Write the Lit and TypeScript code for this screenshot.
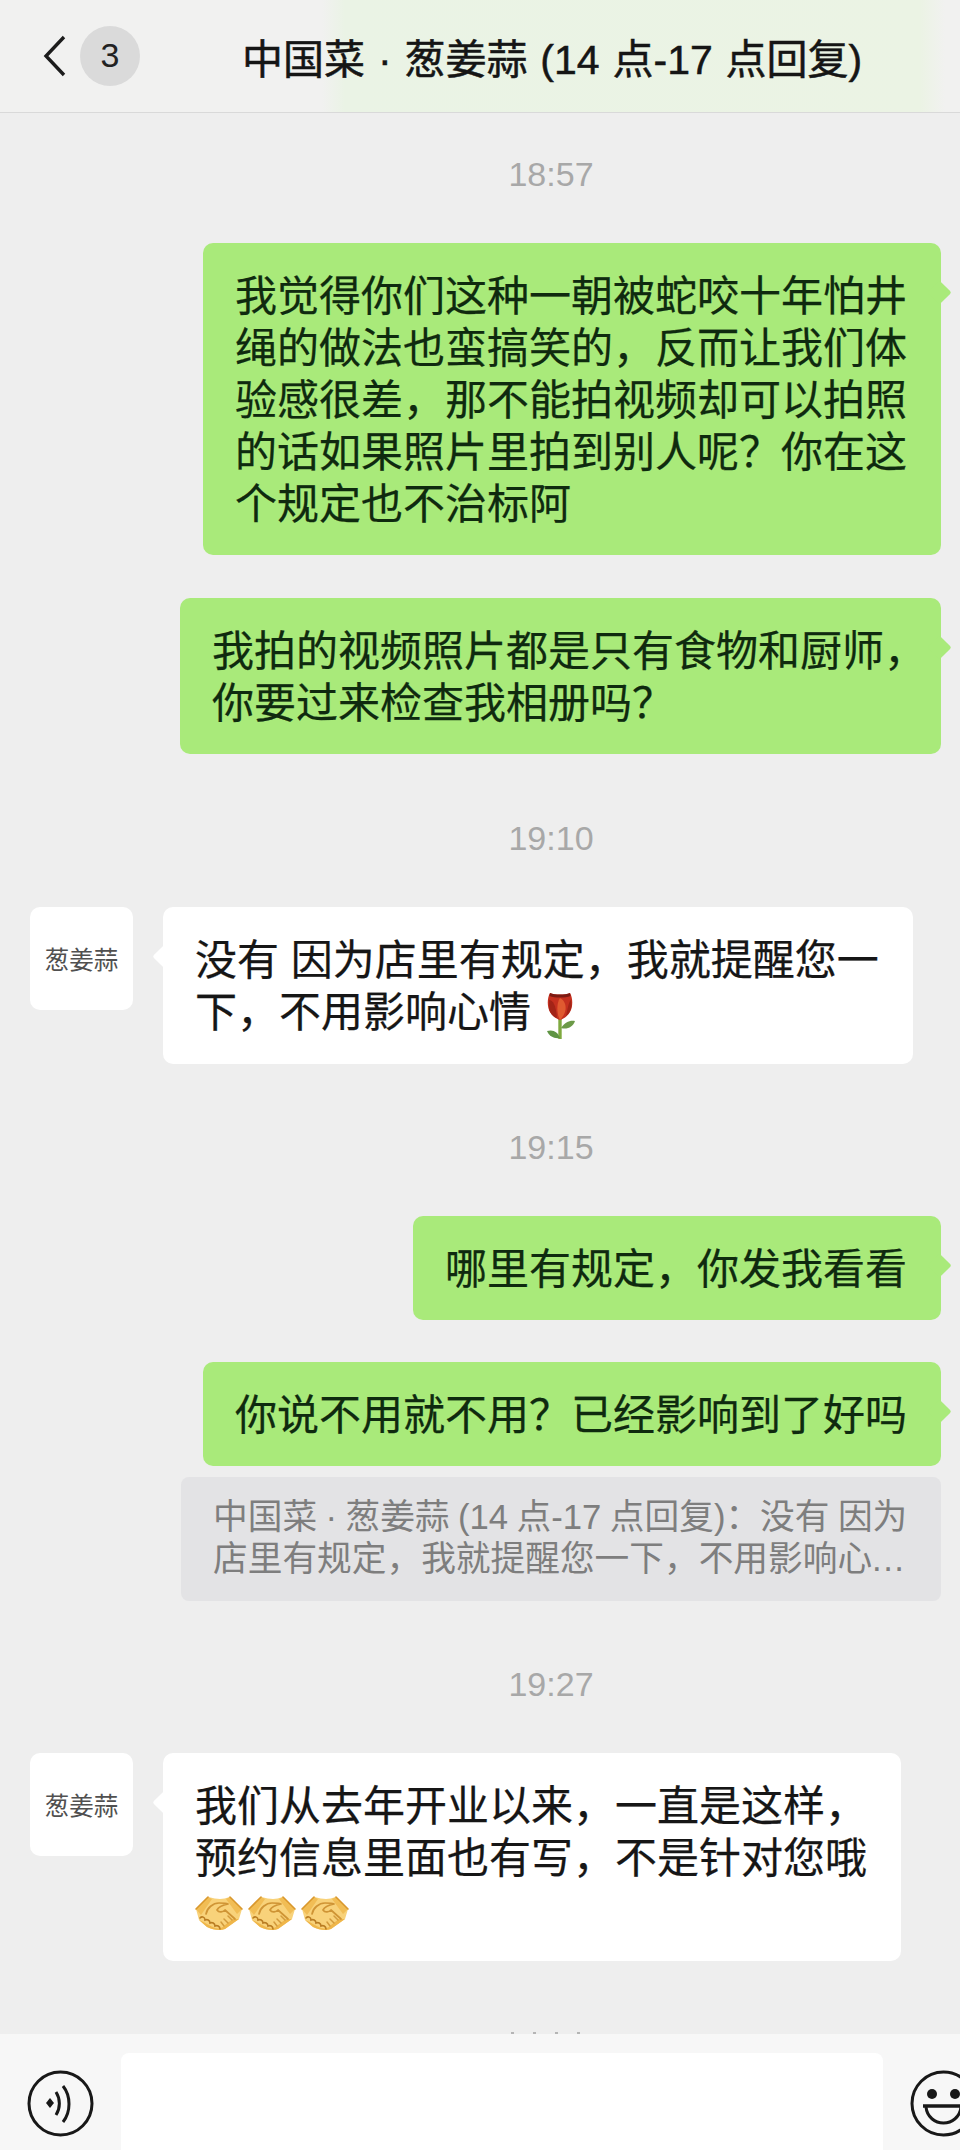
import { LitElement, html, css, svg } from "lit";
import { customElement } from "lit/decorators.js";

const rose = html`<svg class="rose" viewBox="0 0 30 48" aria-hidden="true">
  <path d="M15 24 V47" fill="none" stroke="#7fa93f" stroke-width="3.4"/>
  <path d="M16 36 C20 30 25 28 30 29 C28 35 22 38 16 36Z" fill="#6c9a48"/>
  <path d="M15 46 C9 47 4 44 2 39 C8 37 13 40 15 46Z" fill="#5f9444"/>
  <path d="M5 1 C10 3 20 3 25 1 C28 6 28 15 25 20 C22 25 18 27 15 28 C12 27 8 25 5 20 C2 15 2 6 5 1Z" fill="#c5301f"/>
  <path d="M5 1 C10 3 20 3 25 1 L25.5 4 C20 6 10 6 4.5 4Z" fill="#7c1a12"/>
  <path d="M15 6 C19 8 22 13 20 20 C19 23 17 26 15 28 C12 23 11 12 15 6Z" fill="#e05a30"/>
  <path d="M4 8 C8 8 11 13 12 26 C8 25 5 21 4 17Z" fill="#a32417"/>
  <path d="M26 8 C24 9 23 15 21 24 C24 22 26 18 26.5 14Z" fill="#a32417"/>
</svg>`;

const shake = html`<svg class="shake" viewBox="0 0 48 36" aria-hidden="true">
  <path d="M1 14 L13 2 C18 3 22 4 25 4 C28 4 31 3 35 2 L47 14 L44 24 L30 34 C25 36 18 35 12 32 L4 25Z" fill="#f8d27a"/>
  <path d="M4 25 C9 27 15 31 20 33 C24 34 28 33 30 30 L38 24 L44 24 L30 34 C25 36 18 35 12 32Z" fill="#efb64a"/>
  <path d="M1 14 L13 2 L17 4 L6 20Z M47 14 L35 2 L31 4 L42 19Z" fill="#f1bd55"/>
  <path d="M1 14 L13 2 M47 14 L35 2" stroke="#d9982e" stroke-width="1.6" stroke-linecap="round"/>
  <path d="M11 19 C12 13 18 8 24 8 C28 8 31 8 33 9 C28 10 24 11 22 15 C24 18 28 17 30 15 L40 24" fill="none" stroke="#cf9435" stroke-width="1.7" stroke-linecap="round" stroke-linejoin="round"/>
  <path d="M33 21 L37 25 M29 24 L33 28 M26 27 L29 31" stroke="#d29a3c" stroke-width="1.5" stroke-linecap="round"/>
  <path d="M5 23 C7 21 10 22 10 25 C12 24 15 25 15 28 C17 27 20 28 20 31 C22 30 25 31 25 34" fill="none" stroke="#b97c22" stroke-width="1.6" stroke-linecap="round"/>
</svg>`;

const voice = svg`<circle cx="33.5" cy="33.5" r="31.5" fill="none" stroke="#181818" stroke-width="3"/>
  <path d="M23 28 L27 33 L23 38 L19 33Z" fill="#181818"/>
  <path d="M29 22 C33.5 29 33.5 38 29 45" fill="none" stroke="#181818" stroke-width="3"/>
  <path d="M36 16 C44 26 44 42 36 52" fill="none" stroke="#181818" stroke-width="3"/>`;

const smile = svg`<circle cx="33.5" cy="33.5" r="31.5" fill="none" stroke="#181818" stroke-width="3"/>
  <circle cx="22" cy="24" r="5" fill="#181818"/><circle cx="45" cy="24" r="5" fill="#181818"/>
  <path d="M13 36 H54" stroke="#181818" stroke-width="3.4"/>
  <path d="M16 37 C17 47 25 53 33.5 53 C42 53 50 47 51 37" fill="none" stroke="#181818" stroke-width="3"/>`;

@customElement("app-root")
export class AppRoot extends LitElement {
  static styles = css`
    :host {
      display: block;
      width: 960px;
      height: 2150px;
      font-family: "Liberation Sans", "Noto Sans CJK SC", sans-serif;
    }
    .page {
      position: relative;
      display: flex;
      flex-direction: column;
      height: 2150px;
      overflow: hidden;
      background: #eeeeee;
    }
    .head {
      display: flex;
      align-items: center;
      flex: none;
      box-sizing: border-box;
      height: 113px;
      padding-left: 43px;
      padding-bottom: 1px;
      border-bottom: 1px solid #d9d9d9;
      background: linear-gradient(90deg, #f1f1f0 0, #f1f1f0 322px, #eaf3e5 345px, #ebf3e4 920px, #f1f1f0 945px);
    }
    .chev { width: 24px; height: 42px; flex: none; }
    .badge {
      display: flex;
      align-items: center;
      justify-content: center;
      flex: none;
      width: 60px;
      height: 60px;
      margin-left: 13px;
      border-radius: 50%;
      background: #dadada;
      color: #222;
      font-size: 34px;
    }
    .title {
      margin-left: 102px;
      font-size: 41px;
      font-weight: 400;
      -webkit-text-stroke: 0.5px #151515;
      word-spacing: 1.5px;
      color: #151515;
      white-space: nowrap;
    }
    .chat {
      flex: 1;
      min-height: 0;
      display: flex;
      flex-direction: column;
      align-items: flex-end;
      padding: 41px 19px 0 30px;
    }
    .time {
      align-self: stretch;
      box-sizing: border-box;
      height: 40px;
      line-height: 40px;
      padding-left: 131px;
      margin-bottom: 49px;
      text-align: center;
      font-size: 34px;
      color: #a8a8a8;
    }
    .bubble {
      position: relative;
      box-sizing: border-box;
      padding: 28px 34px 24px 32px;
      border-radius: 10px;
      font-size: 42px;
      line-height: 52px;
      white-space: nowrap;
      -webkit-text-stroke: 0.25px currentColor;
    }
    .bubble::after {
      content: "";
      position: absolute;
      top: 41px;
      width: 17px;
      height: 17px;
      border-radius: 2px;
      transform: rotate(45deg);
    }
    .right {
      margin-bottom: 43px;
      background: #a9ea7a;
      color: #0f2a0f;
    }
    .right::after { right: -7px; background: #a9ea7a; }
    .right.last { margin-bottom: 64px; }
    .right.one { margin-bottom: 42px; }
    .right.toquote { margin-bottom: 11px; }
    .trim { margin-right: -19px; }
    .quote {
      margin-bottom: 63px;
      box-sizing: border-box;
      width: 760px;
      padding: 19px 32px 21px;
      border-radius: 8px;
      background: #e3e3e5;
      color: #7e7e7e;
      font-size: 34.7px;
      line-height: 42px;
      word-spacing: -1.2px;
      white-space: nowrap;
    }
    .dots { letter-spacing: 1.5px; }
    .row {
      align-self: flex-start;
      display: flex;
      align-items: flex-start;
      gap: 30px;
      margin-bottom: 63px;
    }
    .avatar {
      display: flex;
      align-items: center;
      justify-content: center;
      flex: none;
      width: 103px;
      height: 103px;
      border-radius: 10px;
      background: #fff;
      color: #505050;
      font-size: 24.5px;
      white-space: nowrap;
    }
    .left { background: #fff; color: #161616; }
    .left::after { left: -7px; background: #fff; }
    .rose { display: inline-block; width: 30px; height: 48px; margin-left: 14px; vertical-align: -13px; }
    .shake { display: inline-block; width: 48px; height: 36px; margin-right: 5px; vertical-align: -6px; }
    .foot {
      position: relative;
      flex: none;
      display: flex;
      align-items: flex-start;
      box-sizing: border-box;
      height: 116px;
      padding: 19px 0 0 27px;
      background: #f7f7f7;
    }
    .icon { width: 67px; height: 67px; flex: none; margin-top: 17px; }
    .input {
      flex: none;
      width: 762px;
      height: 97px;
      margin: 0 27px;
      border-radius: 8px 8px 0 0;
      background: #fff;
    }
    .peek {
      position: absolute;
      top: -2px;
      left: 511px;
      display: flex;
      gap: 19px;
    }
    .peek i { display: block; width: 3px; height: 2px; background: #b5b5b5; }
  `;

  render() {
    return html`<div class="page">
      <header class="head">
        <svg class="chev" viewBox="0 0 24 42" aria-hidden="true"><path d="M21 2 L3 21 L21 40" fill="none" stroke="#1c1c1c" stroke-width="3.4"/></svg>
        <div class="badge">3</div>
        <div class="title">中国菜 · 葱姜蒜 (14 点-17 点回复)</div>
      </header>
      <main class="chat">
        <div class="time">18:57</div>
        <div class="bubble right">我觉得你们这种一朝被蛇咬十年怕井<br>绳的做法也蛮搞笑的，反而让我们体<br>验感很差，那不能拍视频却可以拍照<br>的话如果照片里拍到别人呢？你在这<br>个规定也不治标阿</div>
        <div class="bubble right last">我拍的视频照片都是只有食物和厨师<span class="trim">，</span><br>你要过来检查我相册吗？</div>
        <div class="time">19:10</div>
        <div class="row">
          <div class="avatar">葱姜蒜</div>
          <div class="bubble left">没有 因为店里有规定，我就提醒您一<br>下，不用影响心情${rose}</div>
        </div>
        <div class="time">19:15</div>
        <div class="bubble right one">哪里有规定，你发我看看</div>
        <div class="bubble right toquote">你说不用就不用？已经影响到了好吗</div>
        <div class="quote">中国菜 · 葱姜蒜 (14 点-17 点回复)：没有 因为<br>店里有规定，我就提醒您一下，不用影响心<span class="dots">...</span></div>
        <div class="time">19:27</div>
        <div class="row">
          <div class="avatar">葱姜蒜</div>
          <div class="bubble left">我们从去年开业以来，一直是这样，<br>预约信息里面也有写，不是针对您哦<br>${shake}${shake}${shake}</div>
        </div>
      </main>
      <footer class="foot">
        <div class="peek"><i></i><i></i><i></i><i></i></div>
        <svg class="icon" viewBox="0 0 67 67" aria-hidden="true">${voice}</svg>
        <div class="input"></div>
        <svg class="icon" viewBox="0 0 67 67" aria-hidden="true">${smile}</svg>
      </footer>
    </div>`;
  }
}
